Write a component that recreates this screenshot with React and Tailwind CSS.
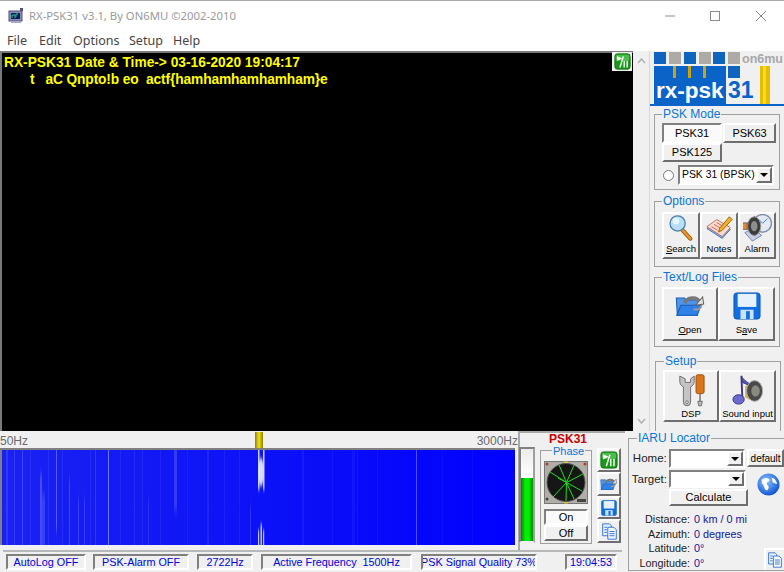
import React from "react";

const R = "border-2 border-t-white border-l-white border-b-[#6e6e6e] border-r-[#6e6e6e] bg-[#f0f0f0]";
const S = "border-2 border-t-[#808080] border-l-[#808080] border-b-white border-r-white";

function PlayPause({ s = 18 }) {
  return (
    <svg width={s} height={s} viewBox="0 0 20 20">
      <rect x="1" y="1" width="18" height="18" rx="3" fill="#189a18" stroke="#0c6e0c" />
      <rect x="2" y="2" width="16" height="7" rx="2" fill="#4fbb4f" />
      <path d="M3.500 3.500l6 3-6 3z" fill="#fff" />
      <path d="M11 4L7 17" stroke="#fff" strokeWidth="1.600" fill="none" />
      <path d="M12 9v8M15.500 9v8" stroke="#fff" strokeWidth="1.600" />
    </svg>
  );
}
function Copy({ s = 18 }) {
  return (
    <svg width={s} height={s} viewBox="0 0 20 20">
      <path d="M2 1h8l2 2v12H2z" fill="#e8f2ff" stroke="#1c62c8" />
      <path d="M8 5h7l3 3v11H8z" fill="#f4f9ff" stroke="#1c62c8" />
      <path d="M4 5h3M4 8h3M4 11h3M10 10h6M10 12.500h6M10 15h6" stroke="#1c62c8" />
    </svg>
  );
}
function Floppy({ s = 30 }) {
  return (
    <svg width={s} height={s} viewBox="0 0 30 30">
      <rect x="1" y="1" width="28" height="28" rx="3" fill="#0f6fe0" stroke="#0c56b8" />
      <rect x="5" y="2" width="20" height="14" fill="#e6f0ff" />
      <rect x="8" y="19" width="14" height="10" fill="#cfe2fb" />
      <rect x="14" y="20.500" width="4" height="8.500" fill="#0f6fe0" />
    </svg>
  );
}
function Folder({ s = 30 }) {
  return (
    <svg width={s} height={s * 0.72} viewBox="0 0 30 22">
      <path d="M1 3h8l2 2h11v15H2z" fill="#4f95e6" stroke="#1a5cb8" />
      <path d="M1.500 20l4-10h20l-4 10z" fill="#2f80e8" stroke="#1a5cb8" />
      <path d="M9 8c3-6 12-7 15-1" stroke="#777" strokeWidth="3.500" fill="none" />
      <path d="M20 10l8-1-1-7z" fill="#e2e2e2" stroke="#666" />
      <path d="M18 14c4 1 7 0 8-4" stroke="#9a9a9a" strokeWidth="2" fill="none" />
    </svg>
  );
}
function Magnifier() {
  return (
    <svg width="24" height="27" viewBox="0 0 28 32">
      <path d="M15 17l10 11" stroke="#8d5a12" strokeWidth="5" strokeLinecap="round" />
      <path d="M15 17l10 11" stroke="#e9952b" strokeWidth="3" strokeLinecap="round" />
      <circle cx="10" cy="10" r="9" fill="#b8def8" stroke="#4b7ea6" strokeWidth="1.500" />
      <circle cx="8" cy="7" r="4" fill="#e6f6ff" />
    </svg>
  );
}
function Notes() {
  return (
    <svg width="27" height="27" viewBox="0 0 30 30">
      <path d="M1 15l11-8 15 9-9 10z" fill="#7fb2ee" stroke="#3a6fb5" />
      <path d="M1 13l11-8 15 9-9 10z" fill="#fbdcd2" stroke="#c8674e" />
      <path d="M6 13l7 4M9 10.500l7 4M12 8.500l7 4" stroke="#d2553a" />
      <path d="M15 15L26 2l3 3-11 12-4 2z" fill="#f3b41e" stroke="#8b5a12" />
    </svg>
  );
}
function Alarm() {
  return (
    <svg width="30" height="28" viewBox="0 0 32 30">
      <circle cx="22" cy="10" r="9.500" fill="#e4eaf2" stroke="#8090a8" strokeWidth="1.500" />
      <path d="M22 10l5-5M22 10l-4-4" stroke="#2f80e8" />
      <path d="M3 20l8 9 10-6-9-8z" fill="#c7cfe8" stroke="#7080a8" />
      <path d="M1 9h5l8-7v22l-8-7H1z" fill="#555" />
      <ellipse cx="13" cy="13" rx="7" ry="10" fill="#3c3c3c" stroke="#999" />
      <ellipse cx="13" cy="13" rx="3.500" ry="5.500" fill="#8e8e8e" />
      <rect x="1" y="10" width="4" height="6" fill="#e8892e" />
    </svg>
  );
}
function Tools() {
  return (
    <svg width="27" height="33" viewBox="0 0 30 36">
      <path d="M2 2v6c0 3 2 5 4 6v17a4 4 0 0 0 8 0V14c2-1 4-3 4-6V2l-4 3v4h-6V5z" fill="#c4c4c4" stroke="#666" />
      <circle cx="10" cy="31" r="1.500" fill="#fff" stroke="#666" />
      <rect x="20" y="0.500" width="9" height="21" rx="2" fill="#d9751a" stroke="#9a4f0c" />
      <path d="M24.500 22v8" stroke="#888" strokeWidth="2" />
      <path d="M22 30h5l-1 5h-3z" fill="#bbb" stroke="#666" />
    </svg>
  );
}
function Music() {
  return (
    <svg width="32" height="32" viewBox="0 0 34 34">
      <path d="M10 2l1 24" stroke="#3a3a8a" strokeWidth="2" />
      <path d="M10 2c2 6 9 6 10 12-3-3-7-4-9-5z" fill="#5858b8" stroke="#34347a" />
      <ellipse cx="7" cy="27" rx="6" ry="5" fill="#6a6ad0" stroke="#34347a" />
      <path d="M14 13l6-3v18l-6-3z" fill="#d8b040" />
      <ellipse cx="24" cy="18" rx="8.500" ry="11" fill="#4a4a4a" stroke="#aaa" />
      <ellipse cx="25" cy="18" rx="4.500" ry="6" fill="#8a8a80" />
    </svg>
  );
}
function Globe() {
  return (
    <svg width="23" height="23" viewBox="0 0 24 24">
      <defs>
        <radialGradient id="gl" cx="0.4" cy="0.35" r="0.7">
          <stop offset="0" stopColor="#8cc4ff" />
          <stop offset="1" stopColor="#0a4fd0" />
        </radialGradient>
      </defs>
      <circle cx="12" cy="12" r="11.500" fill="url(#gl)" />
      <path d="M5 7c3-3 7-2 8 0s-3 2-3 4 3 2 2 5-3 3-4 0-1-4-3-5zM15 5c3 0 5 3 6 6-2 1-3-1-4-1s-1-3-2-5z" fill="#fff" />
    </svg>
  );
}
function Radar() {
  const ends = [[6, 11], [15, 4], [30, 4], [39, 13], [38, 30], [30, 38], [22, 40], [9, 36], [14, 17]];
  return (
    <svg width="44" height="43" viewBox="0 0 44 43">
      <rect width="44" height="43" fill="#b0aea6" />
      <rect x="0.500" y="0.500" width="43" height="42" fill="none" stroke="#777" />
      <circle cx="3" cy="3" r="1.500" fill="#b53a2a" />
      <circle cx="41" cy="3" r="1.500" fill="#b53a2a" />
      <circle cx="3" cy="38" r="1.500" fill="#444" />
      <rect x="33" y="38" width="9" height="3" fill="#444" />
      <rect x="20" y="0.500" width="4" height="1.500" fill="#d8c838" />
      <rect x="20" y="41" width="4" height="1.500" fill="#d8c838" />
      <circle cx="22" cy="21.500" r="19" fill="#161616" stroke="#555" />
      <g stroke="#1de01d" strokeWidth="1">
        {ends.map(([x, y], i) => (
          <line key={i} x1="22.500" y1="21.500" x2={x} y2={y} />
        ))}
      </g>
    </svg>
  );
}
function Logo() {
  return (
    <svg width="134" height="55" viewBox="0 0 134 55" className="shrink-0">
      {[4, 34, 63].map((x) => <rect key={x} x={x} y="1" width="12" height="12" fill="#0f64c0" />)}
      {[19, 49, 78].map((x) => <rect key={x} x={x} y="1" width="12" height="12" fill="#aeaaa6" />)}
      <text x="92" y="12" fontFamily="Liberation Sans, sans-serif" fontWeight="700" fontSize="12.500" fill="#a8a8a8">on6mu</text>
      <rect x="4" y="15" width="72" height="40" fill="#0a64c8" />
      <rect x="0" y="53" width="134" height="2" fill="#0a64c8" />
      <rect x="78" y="15" width="12" height="12" fill="#0f64c0" />
      {[23, 38, 53].map((x) => <rect key={x} x={x} y="15" width="3" height="12" fill="#d0a010" />)}
      <rect x="110" y="15" width="10" height="38" fill="#e6bc00" />
      <rect x="113" y="15" width="3" height="38" fill="#f4dc20" />
      <text x="6" y="47" fontFamily="Liberation Sans, sans-serif" fontWeight="700" fontSize="22.500" fill="#fff">rx-psk</text>
      <text x="78" y="47" fontFamily="Liberation Sans, sans-serif" fontWeight="700" fontSize="23" fill="#0a64c8">31</text>
    </svg>
  );
}
function Waterfall() {
  const lines = [
    [4, .1, 2, 0, 95], [12, .12, 1, 0, 95], [20, .16, 1, 0, 95], [38, .2, 2, 30, 95], [40, .14, 3, 50, 95],
    [54, .28, 1, 0, 75], [67, .2, 1, 35, 95], [76, .16, 1, 55, 95], [82, .14, 1, 55, 95], [93, .12, 1, 0, 95],
    [106, .4, 1, 0, 95], [132, .08, 1, 0, 95], [146, .1, 1, 55, 95], [172, .15, 3, 0, 55], [205, .07, 2, 0, 95],
    [248, .14, 1, 62, 95], [300, .05, 2, 0, 95], [355, .05, 1, 0, 95], [414, .3, 1, 0, 95], [350, .04, 3, 0, 95],
    [28, .08, 1, 0, 95], [46, .07, 1, 0, 95], [60, .07, 1, 0, 95], [88, .07, 1, 0, 95], [118, .06, 1, 0, 95],
    [140, .07, 1, 0, 95], [158, .05, 1, 0, 95], [185, .05, 1, 0, 95], [222, .05, 1, 0, 95], [237, .05, 1, 0, 95],
    [330, .04, 1, 0, 95], [375, .04, 1, 0, 95], [440, .03, 1, 0, 95], [470, .03, 1, 0, 95],
  ];
  return (
    <svg width="513" height="95" viewBox="0 0 513 95" className="block">
      <defs>
        <linearGradient id="wfbg" x1="0" x2="1" y1="0" y2="0">
          <stop offset="0" stopColor="#1a22f2" />
          <stop offset="0.5" stopColor="#0c12f6" />
          <stop offset="1" stopColor="#0000ff" />
        </linearGradient>
        <filter id="wb" x="-50%" y="-20%" width="200%" height="140%"><feGaussianBlur stdDeviation="0.7 2" /></filter>
        <filter id="wc" x="-5%" y="-20%" width="110%" height="140%"><feGaussianBlur stdDeviation="0.5 4" /></filter>
      </defs>
      <rect width="513" height="95" fill="url(#wfbg)" />
      <g filter="url(#wc)">
        {lines.map(([x, o, w, a, b], i) => (
          <rect key={i} x={x} y={a - 6} width={w} height={b - a + 12} fill="#ffffff" opacity={o} />
        ))}
      </g>
      <g filter="url(#wb)" fill="#eef0ff">
        <ellipse cx="259" cy="22" rx="2.500" ry="14" opacity="0.9" />
        <rect x="256" y="-4" width="1.500" height="44" opacity="0.85" />
        <rect x="261" y="-4" width="1.500" height="44" opacity="0.85" />
        <rect x="256" y="80" width="1.200" height="20" opacity="0.8" />
        <rect x="261" y="80" width="1.200" height="20" opacity="0.8" />
        <rect x="258.500" y="74" width="1.500" height="24" opacity="0.8" />
      </g>
    </svg>
  );
}
function Caret() {
  return <span className="block w-0 h-0 border-x-[4px] border-x-transparent border-t-[4px] border-t-black" />;
}
function Combo({ w, h = "h-[19px]", text, className = "" }) {
  return (
    <div className={`${S} ${w} ${h} ${className} flex bg-white items-stretch`}>
      <span className="flex-1 min-w-0 pl-[2px] leading-[15px] whitespace-nowrap overflow-hidden">{text}</span>
      <span className={`${R} w-[16px] shrink-0 flex items-center justify-center`}><Caret /></span>
    </div>
  );
}
function Group({ title, className = "", legend = "left-[7px] -top-[8px] leading-[14px] text-[12px]", children }) {
  return (
    <div className={`relative border border-[#a0a0a0] ${className}`}>
      <span className={`absolute ${legend} bg-[#f0f0f0] px-[1px] text-[#0a74d8] whitespace-nowrap`}>{title}</span>
      {children}
    </div>
  );
}
function ToolBtn({ w, h, label, mb = "mb-[2px]", children }) {
  return (
    <div className={`${R} ${w} ${h} flex flex-col items-center justify-between`}>
      <div className="flex-1 min-h-0 flex items-center justify-center">{children}</div>
      <span className={`text-[9.500px] leading-[12px] ${mb} whitespace-nowrap`}>{label}</span>
    </div>
  );
}
function StatusCell({ w, children, ml }) {
  return (
    <div className={`${S} ${w} ${ml} h-[16px] flex items-center justify-center text-[#0000d8] text-[10.800px] whitespace-nowrap overflow-hidden`}>{children}</div>
  );
}
function Menu({ children, w }) {
  return <span className={`${w} text-[12.500px] text-[#444]`}>{children}</span>;
}
function InfoRow({ label, value, mt = "mt-0" }) {
  return (
    <div className={`flex ${mt} text-[10.800px] leading-[14px]`}>
      <span className="w-[61px] text-right text-[#222] whitespace-nowrap">{label}</span>
      <span className="ml-[4px] text-[#14149a] whitespace-nowrap">{value}</span>
    </div>
  );
}

export default function App() {
  return (
    <div className="w-[784px] h-[572px] overflow-hidden bg-[#f0f0f0] text-black text-[11px]" style={{ fontFamily: '"Liberation Sans", sans-serif' }}>
      <div className="h-[31px] bg-white border-t border-t-[#a8a8a8] flex items-center" style={{ fontFamily: '"Noto Sans", sans-serif' }}>
        <svg width="16" height="16" viewBox="0 0 16 16" className="ml-[8px] mt-[-1px]">
          <rect x="1" y="3" width="13" height="10" fill="#8890b8" stroke="#50507a" />
          <rect x="3" y="5" width="9" height="6" fill="#0c1c50" />
          <path d="M4 10V7h3v3M8 9V6h2" stroke="#30c0a0" fill="none" />
          <rect x="3" y="13" width="10" height="2" fill="#a8a8c8" />
          <rect x="12" y="0" width="3" height="3" fill="#505078" />
        </svg>
        <span className="ml-[5px] text-[11.300px] text-[#9a9a9a] whitespace-nowrap">RX-PSK31 v3.1, By ON6MU ©2002-2010</span>
        <div className="ml-auto flex items-center">
          <svg width="10" height="10" className="mr-[35px]" viewBox="0 0 10 10"><path d="M0 5h10" stroke="#8a8a8a" /></svg>
          <svg width="10" height="10" className="mr-[36px]" viewBox="0 0 10 10"><rect x="0.500" y="0.500" width="9" height="9" fill="none" stroke="#8a8a8a" /></svg>
          <svg width="10" height="10" className="mr-[18px]" viewBox="0 0 10 10"><path d="M0 0l10 10M10 0L0 10" stroke="#8a8a8a" /></svg>
        </div>
      </div>
      <div className="h-[20px] bg-white flex items-center pl-[7px]" style={{ fontFamily: '"Noto Sans", sans-serif' }}>
        <Menu w="w-[32px]">File</Menu>
        <Menu w="w-[34px]">Edit</Menu>
        <Menu w="w-[56px]">Options</Menu>
        <Menu w="w-[44px]">Setup</Menu>
        <Menu w="w-[40px]">Help</Menu>
      </div>

      <div className="h-[380px] flex">
        <div className="relative w-[633px] h-[380px] bg-black border-t-2 border-l-2 border-t-[#7a7a7a] border-l-[#7a7a7a] pl-[2px] pt-[1px] text-[#ffff00] font-bold text-[13.750px] leading-[17px] whitespace-pre">
          <div>RX-PSK31 Date &amp; Time-&gt; 03-16-2020 19:04:17</div>
          <div className="tracking-[-0.12px]">{"       t   aC Qnpto!b eo  actf{hamhamhamhamham}e"}</div>
          <div className="absolute right-[1px] top-[-1px] w-[20px] h-[19px] bg-[#f0f0f0] flex items-center justify-center"><PlayPause s={17} /></div>
        </div>
        <div className="w-[17px] border-r border-r-[#d8d8d8] flex flex-col items-center justify-between py-[7px]">
          <svg width="9" height="6" viewBox="0 0 9 6"><path d="M1 5l3.500-4L8 5" fill="none" stroke="#b0b0b0" strokeWidth="1.500" /></svg>
          <svg width="9" height="6" viewBox="0 0 9 6"><path d="M1 1l3.500 4L8 1" fill="none" stroke="#b0b0b0" strokeWidth="1.500" /></svg>
        </div>
        <div className="w-[134px] flex flex-col">
          <Logo />
          <Group title="PSK Mode" className="mt-[8px] ml-[4px] w-[126px] h-[76px] pl-[7px] pt-[8px]">
            <div className="flex flex-wrap w-[114px]">
              <div className={`${S} w-[60px] h-[20px] flex items-center justify-center text-[11px] bg-[#fafafa]`}>PSK31</div>
              <div className={`${R} w-[53px] h-[20px] ml-[1px] flex items-center justify-center text-[11px]`}>PSK63</div>
              <div className={`${R} w-[60px] h-[19px] flex items-center justify-center text-[11px]`}>PSK125</div>
            </div>
            <div className="flex items-center mt-[3px]">
              <span className="w-[11px] h-[11px] ml-[1px] rounded-full bg-white border border-[#777]" />
              <Combo w="w-[96px] ml-[4px]" h="h-[20px]" text="PSK 31 (BPSK)" className="text-[10.400px]" />
            </div>
          </Group>
          <Group title="Options" className="mt-[11px] ml-[4px] w-[126px] h-[66px] pl-[7px] pt-[10px]">
            <div className="flex">
              <ToolBtn w="w-[38px]" h="h-[47px]" label={<><u>S</u>earch</>}><Magnifier /></ToolBtn>
              <ToolBtn w="w-[38px]" h="h-[47px]" label="Notes"><Notes /></ToolBtn>
              <ToolBtn w="w-[38px]" h="h-[47px]" label="Alarm"><Alarm /></ToolBtn>
            </div>
          </Group>
          <Group title="Text/Log Files" className="mt-[10px] ml-[4px] w-[126px] h-[71px] pl-[7px] pt-[9px]">
            <div className="flex">
              <ToolBtn w="w-[56px]" h="h-[54px]" mb="mb-[3px]" label={<><u>O</u>pen</>}><Folder s={31} /></ToolBtn>
              <ToolBtn w="w-[57px]" h="h-[54px]" mb="mb-[3px]" label={<>S<u>a</u>ve</>}><Floppy s={28} /></ToolBtn>
            </div>
          </Group>
          <Group title="Setup" legend="left-[8px] -top-[8px] leading-[14px] text-[12px]" className="mt-[14px] ml-[5px] w-[126px] h-[70px] pl-[7px] pt-[8px] border-b-0">
            <div className="flex">
              <ToolBtn w="w-[56px]" h="h-[52px]" mb="mb-[0px]" label="DSP"><Tools /></ToolBtn>
              <ToolBtn w="w-[57px]" h="h-[52px]" mb="mb-[0px]" label="Sound input"><Music /></ToolBtn>
            </div>
          </Group>
        </div>
      </div>

      <div className="h-[141px] flex">
        <div className="w-[625px] flex flex-col">
          <div className="h-[119px] flex">
            <div className="w-[518px] flex flex-col">
              <div className="relative h-[17px] flex items-end justify-between text-[12px] leading-[14px] text-[#6a6a6a]">
                <span>50Hz</span>
                <span>3000Hz</span>
                <span className="absolute left-[255px] top-[1px] w-[8px] h-[16px] bg-[linear-gradient(90deg,#8a8400,#f0e020,#8a8400)]" />
              </div>
              <div className="w-[515px] h-[97px] border-t-2 border-l-2 border-t-[#808080] border-l-[#808080]"><Waterfall /></div>
            </div>
            <div className="w-[107px] flex flex-col border-t-2 border-l-2 border-t-[#a8a8a8] border-l-[#a8a8a8]">
              <div className="h-[13px] text-center text-[#c80000] font-bold text-[12px] leading-[13px] pr-[9px]">PSK31</div>
              <div className="flex">
                <div className="w-[16px] h-[96px] ml-[-1px] mt-[1px] border-2 border-t-[#808080] border-l-[#808080] border-b-[#f0f0f0] border-r-[#a0a0a0] flex flex-col">
                  <div className="h-[29px] bg-[linear-gradient(#ececec,#ffffff)]" />
                  <div className="flex-1 bg-[linear-gradient(90deg,#008a00,#00ee00_35%,#00ee00_65%,#008a00)]" />
                </div>
                <div className="flex flex-col ml-[5px]">
                  <Group title="Phase" legend="left-[11px] -top-[5px] leading-[10px] text-[11px]" className="w-[52px] h-[94px] mt-[4px] pl-[3px] pt-[10px]">
                    <Radar />
                    <div className={`${S} mt-[5px] w-[44px] h-[16px] bg-[#fafafa] flex items-center justify-center text-[11px]`}>On</div>
                    <div className={`${R} w-[44px] h-[16px] flex items-center justify-center text-[11px]`}>Off</div>
                  </Group>
                </div>
                <div className="flex flex-col ml-[5px] mt-[2px]">
                  <div className={`${R} w-[24px] h-[24px] flex items-center justify-center`}><PlayPause s={18} /></div>
                  <div className={`${R} w-[24px] h-[24px] flex items-center justify-center`}><Folder s={18} /></div>
                  <div className={`${R} w-[24px] h-[23px] flex items-center justify-center`}><Floppy s={16} /></div>
                  <div className={`${R} w-[24px] h-[24px] flex items-center justify-center`}><Copy s={17} /></div>
                </div>
              </div>
            </div>
          </div>
          <div className="h-[22px] ml-[3px] w-[619px] border-t-2 border-t-[#b8b8b8] flex items-center pl-[3px]">
            <StatusCell w="w-[80px]">AutoLog OFF</StatusCell>
            <StatusCell w="w-[96px]" ml="ml-[7px]">PSK-Alarm OFF</StatusCell>
            <StatusCell w="w-[56px]" ml="ml-[8px]">2722Hz</StatusCell>
            <StatusCell w="w-[151px]" ml="ml-[8px]">Active Frequency&nbsp;&nbsp;1500Hz</StatusCell>
            <StatusCell w="w-[116px]" ml="ml-[9px]">PSK Signal Quality 73%</StatusCell>
            <StatusCell w="w-[52px]" ml="ml-[28px]">19:04:53</StatusCell>
          </div>
        </div>
        <Group title="IARU Locator" legend="left-[8px] -top-[8px] leading-[14px] text-[12px]" className="relative ml-[3px] mt-[7px] mb-[1px] w-[156px] border-r-0 pt-[10px]">
          <div className="flex items-start">
            <span className="w-[38px] text-right text-[11.500px] leading-[19px] text-[#222]">Home:</span>
            <Combo w="w-[77px] ml-[2px]" h="h-[19px]" />
            <div className={`${R} w-[37px] h-[18px] ml-[2px] text-[10px] flex items-center justify-center`}>default</div>
          </div>
          <div className="flex items-start mt-[2px]">
            <span className="w-[38px] text-right text-[11.500px] leading-[18px] text-[#222]">Target:</span>
            <Combo w="w-[77px] ml-[2px]" h="h-[18px]" />
            <div className="ml-[11px] mt-[3px]"><Globe /></div>
          </div>
          <div className={`${R} w-[79px] h-[17px] ml-[40px] -mt-[7px] text-[11px] flex items-center justify-center`}>Calculate</div>
          <div className="mt-[6px]">
            <InfoRow label="Distance:" value="0 km / 0 mi" />
            <InfoRow label="Azimuth:" value="0 degrees" mt="mt-[1px]" />
            <InfoRow label="Latitude:" value="0°" />
            <InfoRow label="Longitude:" value="0°" mt="mt-[1px]" />
          </div>
          <div className="absolute right-0 bottom-0 w-[20px] h-[22px] border-t-2 border-l-2 border-t-white border-l-white flex items-center justify-center"><Copy s={16} /></div>
        </Group>
      </div>
    </div>
  );
}
